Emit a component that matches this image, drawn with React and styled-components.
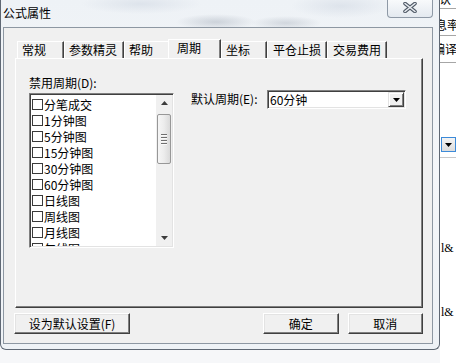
import React from 'react';
import styled, { createGlobalStyle } from 'styled-components';

const Global = createGlobalStyle`
  html, body { margin: 0; padding: 0; }
  body {
    font-family: "Noto Sans CJK SC", "Liberation Sans", sans-serif;
    font-size: 12px;
    color: #000;
  }
  * { box-sizing: border-box; }
`;

const FONT = `"Noto Sans CJK SC", "Liberation Sans", sans-serif`;

const Screen = styled.div`
  width: 456px;
  height: 363px;
  overflow: hidden;
  display: grid;
  grid-template-columns: 440px 16px;
  grid-template-rows: 350px 13px;
  background: #f6f7f9;
`;

const Window = styled.div`
  grid-column: 1;
  grid-row: 1;
  display: flex;
  flex-direction: column;
  border: 1px solid #5f6874;
  border-top: none;
  border-radius: 0 0 6px 6px;
  background:
    radial-gradient(ellipse 40px 8px at 215px 22px, rgba(140,150,165,0.35), transparent),
    radial-gradient(ellipse 35px 7px at 285px 23px, rgba(140,150,165,0.3), transparent),
    radial-gradient(ellipse 60px 10px at 140px 4px, rgba(190,200,215,0.35), transparent),
    radial-gradient(ellipse 50px 12px at 340px 6px, rgba(190,200,215,0.35), transparent),
    linear-gradient(180deg, #eef2f6 0%, #f4f6f9 50%, #eef2f6 100%);
`;

const TitleBar = styled.div`
  height: 27px;
  display: flex;
  justify-content: space-between;
  align-items: flex-start;
`;

const Title = styled.div`
  padding: 5px 0 0 2px;
  line-height: 16px;
  font-size: 12px;
`;

const CloseButton = styled.div`
  width: 46px;
  height: 18px;
  margin-right: 6px;
  border: 1px solid #8e99a6;
  border-top: none;
  border-radius: 0 0 4px 4px;
  background: linear-gradient(180deg, rgba(255,255,255,0.6), rgba(225,231,238,0.8));
  display: flex;
  align-items: center;
  justify-content: center;
  padding-bottom: 2px;
`;

const Client = styled.div`
  margin-left: 2px;
  width: 430px;
  height: 317px;
  border: 1px solid #8d97a2;
  background: #f0f0f0;
  padding: 11px 0 0 11px;
  display: flex;
  flex-direction: column;
`;

const TabStrip = styled.div`
  height: 19px;
  margin-left: 2px;
  display: flex;
  align-items: flex-end;
`;

const Tab = styled.div`
  width: ${p => p.$w}px;
  height: ${p => (p.$active ? 20 : 17)}px;
  margin-left: ${p => (p.$active ? -2 : 0)}px;
  margin-bottom: ${p => (p.$active ? -1 : 0)}px;
  padding-left: ${p => p.$pl}px;
  background: #f0f0f0;
  border-top: 1px solid #ffffff;
  border-left: 1px solid #ffffff;
  border-right: 1px solid #404040;
  box-shadow: inset -1px 0 0 #808080;
  line-height: 16px;
  font-size: 12px;
  white-space: nowrap;
`;

const Panel = styled.div`
  width: 408px;
  height: 250px;
  border-top: 1px solid #ffffff;
  border-left: 1px solid #ffffff;
  border-right: 1px solid #404040;
  border-bottom: 1px solid #404040;
  box-shadow: inset -1px -1px 0 #808080;
  padding: 16px 0 0 13px;
  display: flex;
  align-items: flex-start;
`;

const LeftCol = styled.div`
  width: 145px;
  display: flex;
  flex-direction: column;
`;

const FieldLabel = styled.div`
  line-height: 16px;
  font-size: 12px;
  margin-bottom: 2px;
  white-space: nowrap;
  width: ${p => (p.$w ? `${p.$w}px` : 'auto')};
`;

const ListBox = styled.div`
  width: 145px;
  height: 155px;
  border: 1px solid;
  border-color: #808080 #ffffff #ffffff #808080;
  box-shadow: inset 1px 1px 0 #404040, inset -1px -1px 0 #e3e3e3;
  padding: 1px;
  display: flex;
  background: #ffffff;
`;

const Items = styled.div`
  flex: 1;
  overflow: hidden;
  padding: 1px 0 0 1px;
`;

const Item = styled.div`
  height: 16px;
  display: flex;
  align-items: center;
  gap: 1px;
  font-size: 12px;
  white-space: nowrap;
`;

const Check = styled.span`
  width: 11px;
  height: 11px;
  border: 1px solid #3a3a3a;
  background: #fff;
  flex: none;
`;

const ScrollBar = styled.div`
  width: 16px;
  background: #f0f0f0;
  display: flex;
  flex-direction: column;
  align-items: center;
`;

const ArrowCell = styled.div`
  width: 16px;
  height: 16px;
  display: flex;
  align-items: center;
  justify-content: center;
  margin-top: ${p => (p.$bottom ? 'auto' : '0')};
`;

const Thumb = styled.div`
  width: 14px;
  height: 50px;
  margin-top: 3px;
  border: 1px solid #979797;
  border-radius: 2px;
  background: linear-gradient(90deg, #f6f6f6 0%, #ececec 50%, #dadada 100%);
  display: flex;
  flex-direction: column;
  align-items: center;
  justify-content: center;
  gap: 2px;
`;

const Grip = styled.span`
  width: 6px;
  height: 1px;
  background: #6f6f6f;
  box-shadow: 0 1px 0 #fafafa;
`;

const RightCol = styled.div`
  margin-left: 17px;
  padding-top: 15px;
  display: flex;
  align-items: center;
`;

const Combo = styled.div`
  width: 139px;
  height: 19px;
  border: 1px solid;
  border-color: #808080 #ffffff #ffffff #808080;
  box-shadow: inset 1px 1px 0 #404040, inset -1px -1px 0 #e3e3e3;
  padding: 1px;
  background: #fff;
  display: flex;
  align-items: stretch;
`;

const ComboText = styled.div`
  flex: 1;
  padding-left: 1px;
  line-height: 15px;
  font-size: 12px;
`;

const ComboButton = styled.div`
  width: 16px;
  background: #f0f0f0;
  border: 1px solid;
  border-color: #e3e3e3 #404040 #404040 #e3e3e3;
  box-shadow: inset 1px 1px 0 #ffffff, inset -1px -1px 0 #808080;
  display: flex;
  align-items: center;
  justify-content: center;
`;

const Footer = styled.div`
  width: 408px;
  margin-top: 5px;
  display: flex;
  align-items: center;
`;

const Button = styled.div`
  width: ${p => p.$w}px;
  height: 21px;
  margin-left: ${p => p.$ml}px;
  background: #f0f0f0;
  border: 1px solid;
  border-color: #ffffff #404040 #404040 #ffffff;
  box-shadow: inset -1px -1px 0 #808080, inset 1px 1px 0 #e3e3e3;
  display: flex;
  align-items: center;
  justify-content: center;
  font-size: 12px;
  line-height: 16px;
  white-space: nowrap;
`;

const BackWindow = styled.div`
  grid-column: 2;
  grid-row: 1 / span 2;
  background: #ffffff;
  display: flex;
  flex-direction: column;
  overflow: hidden;
  font-family: ${FONT};
`;

const BackRow = styled.div`
  height: ${p => p.$h}px;
  border-bottom: 1px solid #a6a6a6;
  overflow: hidden;
  padding-top: ${p => p.$pt}px;
  line-height: 16px;
  font-size: 12px;
  white-space: nowrap;
`;

const BackText = styled.div`
  margin-left: ${p => p.$ml}px;
  margin-top: ${p => p.$mt || 0}px;
`;

const BackCombo = styled.div`
  width: 15px;
  height: 15px;
  margin: 74px 0 0 1px;
  border: 1px solid #3c8ad8;
  background: linear-gradient(180deg, #f4f4f4, #dcdcdc);
  display: flex;
  align-items: center;
  justify-content: center;
`;

const BackLine = styled.div`
  margin-top: 5px;
  height: 1px;
  background: #c8c8c8;
`;

const Amp = styled.div`
  margin-top: ${p => p.$mt}px;
  line-height: 16px;
  font-size: 12px;
  font-family: "Liberation Serif", serif;
  white-space: nowrap;
  padding-left: 1px;
`;

const Tri = ({ up, w = 7, h = 4, color = '#000' }) => (
  <svg width={w} height={h} viewBox={`0 0 ${w} ${h}`} style={{ display: 'block' }}>
    <polygon
      points={up ? `0,${h} ${w},${h} ${w / 2},0` : `0,0 ${w},0 ${w / 2},${h}`}
      fill={color}
    />
  </svg>
);

const CloseGlyph = () => (
  <svg width="14" height="11" viewBox="0 0 14 11" style={{ display: 'block' }}>
    <path d="M2 1.5 L12 9.5 M12 1.5 L2 9.5" stroke="#4f5966" strokeWidth="3.6" strokeLinecap="round" />
    <path d="M2 1.5 L12 9.5 M12 1.5 L2 9.5" stroke="#e9edf2" strokeWidth="1.6" strokeLinecap="round" />
  </svg>
);

const tabs = [
  { label: '常规', w: 47, pl: 4 },
  { label: '参数精灵', w: 60, pl: 4 },
  { label: '帮助', w: 46, pl: 4 },
  { label: '周期', w: 53, pl: 8, active: true },
  { label: '坐标', w: 46, pl: 4 },
  { label: '平仓止损', w: 60, pl: 5 },
  { label: '交易费用', w: 60, pl: 5 },
];

const periods = ['分笔成交', '1分钟图', '5分钟图', '15分钟图', '30分钟图', '60分钟图', '日线图', '周线图', '月线图', '年线图'];

export default function App() {
  return (
    <>
      <Global />
      <Screen>
        <Window>
          <TitleBar>
            <Title>公式属性</Title>
            <CloseButton><CloseGlyph /></CloseButton>
          </TitleBar>
          <Client>
            <TabStrip>
              {tabs.map(t => (
                <Tab key={t.label} $w={t.w} $pl={t.pl} $active={t.active}>{t.label}</Tab>
              ))}
            </TabStrip>
            <Panel>
              <LeftCol>
                <FieldLabel>禁用周期(D):</FieldLabel>
                <ListBox>
                  <Items>
                    {periods.map(p => (
                      <Item key={p}><Check />{p}</Item>
                    ))}
                  </Items>
                  <ScrollBar>
                    <ArrowCell><Tri up w={7} h={4} color="#3c3c3c" /></ArrowCell>
                    <Thumb>
                      <Grip /><Grip /><Grip /><Grip />
                    </Thumb>
                    <ArrowCell $bottom><Tri w={7} h={4} color="#3c3c3c" /></ArrowCell>
                  </ScrollBar>
                </ListBox>
              </LeftCol>
              <RightCol>
                <FieldLabel $w={76}>默认周期(E):</FieldLabel>
                <Combo>
                  <ComboText>60分钟</ComboText>
                  <ComboButton><Tri w={7} h={4} /></ComboButton>
                </Combo>
              </RightCol>
            </Panel>
            <Footer>
              <Button $w={117} $ml={-1}>设为默认设置(F)</Button>
              <Button $w={76} $ml={133}>确定</Button>
              <Button $w={76} $ml={9}>取消</Button>
            </Footer>
          </Client>
        </Window>
        <BackWindow>
          <BackRow $h={9} $pt={0}><BackText $ml={-1} $mt={-9}>认</BackText></BackRow>
          <BackRow $h={27} $pt={8}><BackText $ml={-5}>息率</BackText></BackRow>
          <BackRow $h={27} $pt={5}><BackText $ml={-7}>编译</BackText></BackRow>
          <BackCombo><Tri w={7} h={4} /></BackCombo>
          <BackLine />
          <Amp $mt={82}>l&amp;</Amp>
          <Amp $mt={48}>l&amp;</Amp>
        </BackWindow>
      </Screen>
    </>
  );
}
